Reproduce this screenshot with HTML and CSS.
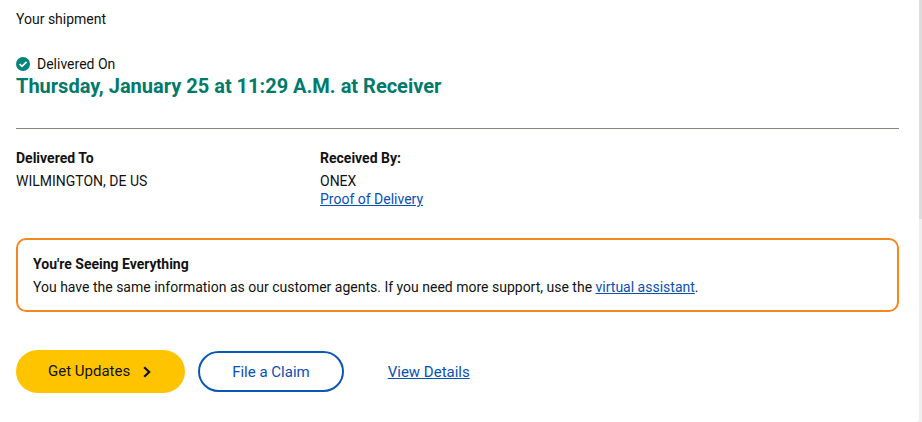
FILE: index.html
```
<!DOCTYPE html>
<html lang="en">
<head>
    <meta charset="UTF-8">
    <meta name="viewport" content="width=device-width, initial-scale=1.0">
    <title>Your shipment</title>
    <link rel="stylesheet" href="styles.css">
</head>
<body>
    <main class="shipment">
        <p class="label">Your shipment</p>

        <!-- delivery status -->
        <div class="status">
            <svg class="status-icon" viewBox="0 0 14 14" aria-hidden="true">
                <circle cx="7" cy="7" r="7" fill="#01857a"/>
                <path d="M3.6 7 L6 9.3 L10.6 4.8" fill="none" stroke="#fff" stroke-width="1.7"/>
            </svg>
            <span>Delivered On</span>
        </div>
        <h1 class="date">Thursday, January 25 at 11:29 A.M. at Receiver</h1>

        <hr class="line">

        <div class="details">
            <div>
                <h2 class="title">Delivered To</h2>
                <p>WILMINGTON, DE US</p>
            </div>
            <div>
                <h2 class="title">Received By:</h2>
                <p>ONEX</p>
                <a href="#" class="link">Proof of Delivery</a>
            </div>
        </div>

        <!-- notice -->
        <section class="notice">
            <h2 class="title">You're Seeing Everything</h2>
            <p>You have the same information as our customer agents. If you need more support, use the <a href="#" class="link">virtual assistant</a>.</p>
        </section>

        <div class="actions">
            <button type="button" class="btn btn-primary">
                Get Updates
                <svg class="arrow" viewBox="0 0 8 12" aria-hidden="true">
                    <path d="M1.2 1.2 L6.2 6 L1.2 10.8" fill="none" stroke="#121212" stroke-width="2.2"/>
                </svg>
            </button>
            <button type="button" class="btn btn-outline">File a Claim</button>
            <a href="#" class="link view">View Details</a>
        </div>
    </main>
    <div class="rail"><div class="thumb"></div></div>
</body>
</html>
```

FILE: styles.css
```
* {
    box-sizing: border-box;
}

body {
    margin: 0;
    display: flex;
    min-height: 100vh;
    background-color: #efefef;
    color: #121212;
    font-family: Roboto, "Liberation Sans", sans-serif;
    font-size: 14px;
    line-height: 18px;
}

p, h1, h2 {
    margin: 0;
}

.shipment {
    flex: 1;
    padding: 10px 20px 28px 16px;
    background-color: #fff;
    border-bottom-right-radius: 4px;
}

.status {
    display: flex;
    align-items: center;
    gap: 7px;
    margin-top: 27px;
}

.status-icon {
    width: 14px;
    height: 14px;
}

.date {
    color: #017a6c;
    font-size: 20px;
    font-weight: 700;
    line-height: 26px;
}

.line {
    margin: 29px 0 20px;
    border: 0;
    border-top: 1px solid #8c857e;
}

/* two columns, the rest of the row stays empty */
.details {
    display: grid;
    grid-template-columns: 304px 1fr;
}

.title {
    margin-bottom: 5px;
    font-size: 14px;
    font-weight: 700;
}

.link {
    color: #0a4fb4;
    text-decoration: underline;
}

.notice {
    margin-top: 30px;
    padding: 15px 15px 14px;
    border: 2px solid #f5871f;
    border-radius: 10px;
}

.actions {
    display: flex;
    align-items: center;
    margin-top: 38px;
    font-size: 15px;
}

.btn {
    display: flex;
    align-items: center;
    border-radius: 22px;
    font: inherit;
    cursor: pointer;
}

.btn-primary {
    gap: 13px;
    height: 43px;
    padding: 0 34px 2px 32px;
    border: 0;
    background-color: #ffc400;
    color: #121212;
}

.arrow {
    width: 8px;
    height: 12px;
    margin-top: 2px;
}

.btn-outline {
    height: 41px;
    margin-left: 13px;
    padding: 0 32px;
    border: 2px solid #0a57b8;
    background-color: #fff;
    color: #0a4fb4;
}

.view {
    margin-left: 44px;
}

/* scroll bar on the right edge */
.rail {
    width: 3px;
    background-color: #efefef;
}

.thumb {
    height: 52vh;
    background-color: #dcdcdc;
}
```
